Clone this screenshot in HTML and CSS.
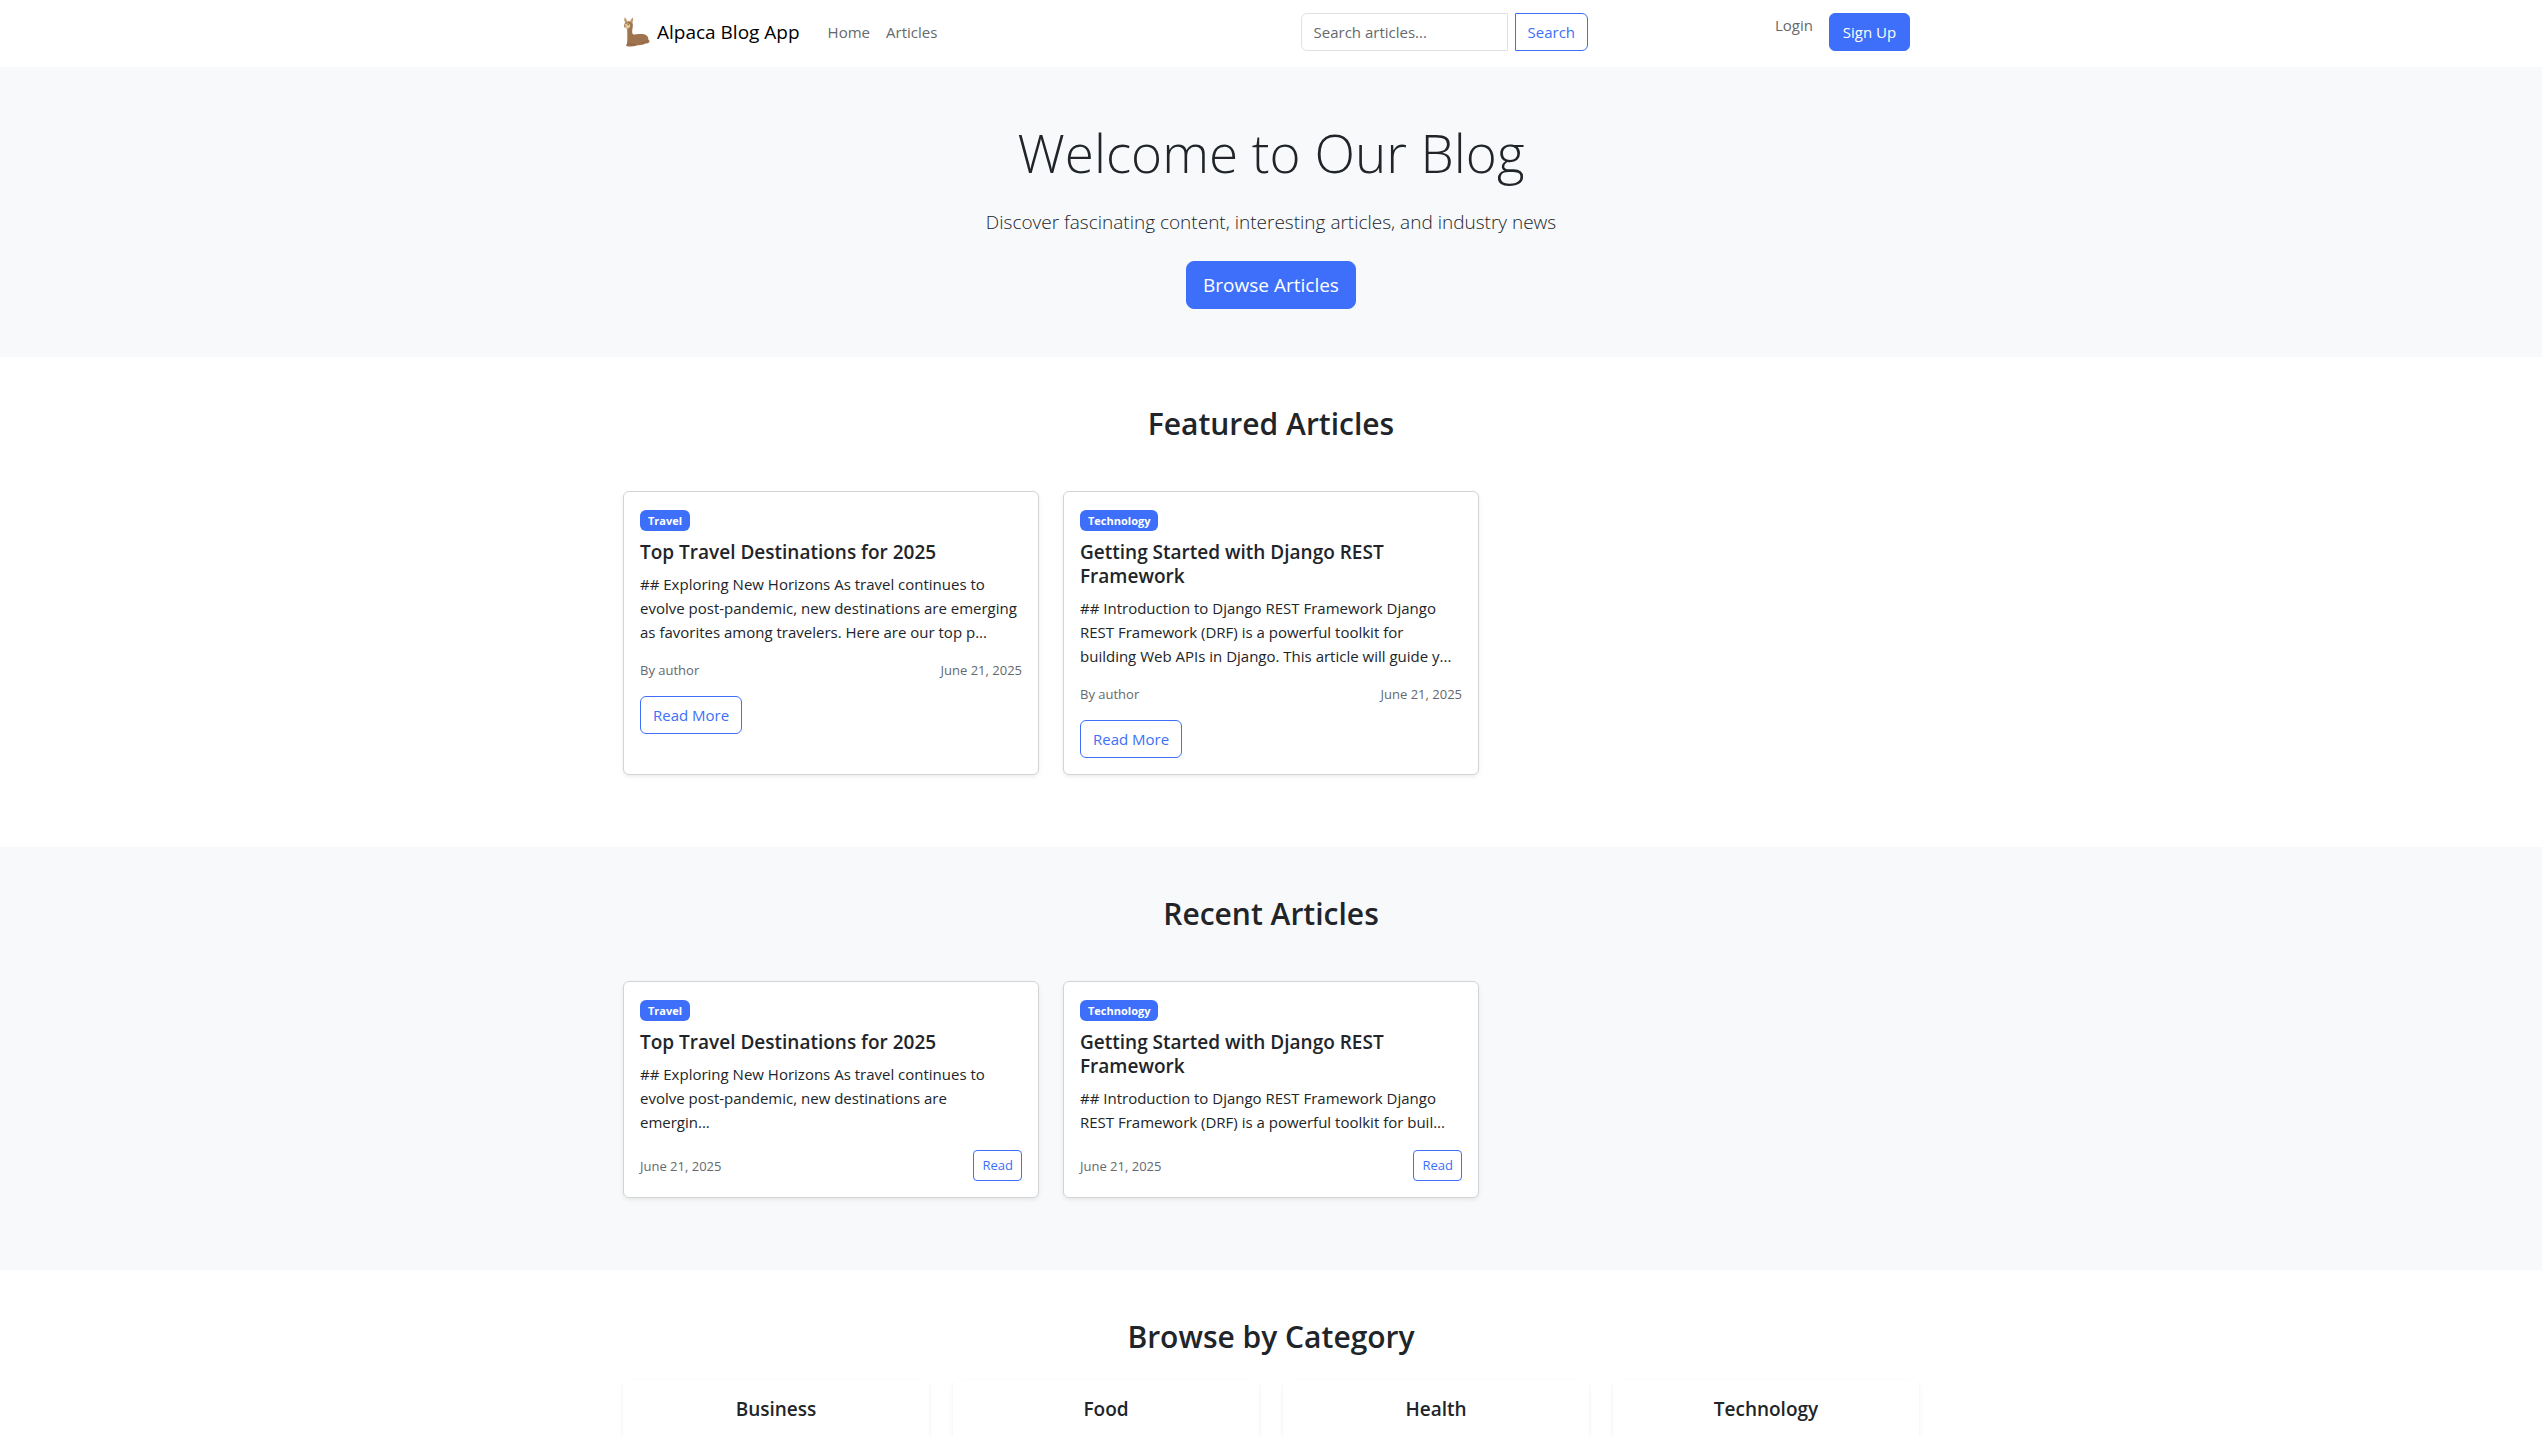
FILE: index.html
```html
<!DOCTYPE html>
<html lang="en">
<head>
<meta charset="utf-8">
<meta name="viewport" content="width=device-width, initial-scale=1">
<title>Alpaca Blog App</title>
<link rel="stylesheet" href="styles.css">
</head>
<body>
<header class="navbar">
  <div class="container navbar-inner">
    <a class="brand" href="#">
      <svg class="brand-logo" viewBox="0 0 28 30" aria-hidden="true">
        <path fill="#a0734f" d="M3 5 C4.500 3.800 8 3.800 9.300 5.600 C10.300 7.500 9.800 10.500 9.300 12.500 C9 15.500 9.200 17.300 10.500 17.600 C13.500 16.900 18 16.600 21 17.200 C24 17.800 25.600 20 25.300 22.600 C26.400 23.200 26.800 24.400 26.300 25.200 C25.600 26.200 24 26.200 22.500 26.600 C20 28.400 16 28.400 13.500 28.600 C10.500 29.700 6.500 29.700 4.200 29.300 C2.800 29 2.800 27.700 3.800 27.200 C4.500 24 4.300 20 4.300 17 C4.300 14.500 4.300 13 4 11.500 C2.200 11.200 .9 10.300 1.100 8.700 C1.300 7 1.800 5.900 3 5 Z"/>
        <path fill="#c49b70" d="M1.500 .6 C3 1 4.200 3 4.400 5.300 L2.400 6.200 C1.200 4.500 1 2.500 1.500 .6 Z M9.900 .6 C10.500 2.600 10.100 4.700 9 6.200 L7.200 4.800 C7.400 3 8.500 1.300 9.900 .6 Z"/>
        <path fill="#e3c79b" d="M3 6.800 C4.600 6 6.900 6.500 7.200 8.200 C7.400 10.200 5.800 11.900 3.900 11.600 C2.100 11.300 .9 10.400 1.100 8.900 C1.300 7.700 2 7.100 3 6.800 Z"/>
        <path fill="#5b3d27" d="M1.300 8.500 h1.200 v1 h-1.200 Z M4.700 7 h.9 v1 h-.9 Z"/>
        <path fill="none" stroke="#8a5e3c" stroke-width=".7" d="M4.800 27.600 C8 26.800 10.500 27.800 13 28 M18 25.800 C20.500 26.400 23 25.800 24.600 23"/>
      </svg>
      <span>Alpaca Blog App</span>
    </a>
    <nav class="nav-links">
      <a href="#">Home</a>
      <a href="#">Articles</a>
    </nav>
    <form class="search" role="search">
      <input class="search-input" type="search" placeholder="Search articles..." aria-label="Search articles">
      <button class="btn btn-outline search-button" type="submit">Search</button>
    </form>
    <div class="account">
      <a class="login" href="#">Login</a>
      <a class="btn btn-primary signup" href="#">Sign Up</a>
    </div>
  </div>
</header>
<main>
  <section class="hero">
    <h1>Welcome to Our Blog</h1>
    <p>Discover fascinating content, interesting articles, and industry news</p>
    <a class="btn btn-primary btn-large" href="#">Browse Articles</a>
  </section>

  <section class="section">
    <div class="container">
      <h2>Featured Articles</h2>
      <div class="articles">
        <article class="card">
          <div class="badge-row"><span class="badge">Travel</span></div>
          <h3>Top Travel Destinations for 2025</h3>
          <p>## Exploring New Horizons As travel continues to evolve post-pandemic, new destinations are emerging as favorites among travelers. Here are our top p...</p>
          <div class="meta"><span>By author</span><time datetime="2025-06-21">June 21, 2025</time></div>
          <a class="btn btn-outline" href="#">Read More</a>
        </article>
        <article class="card">
          <div class="badge-row"><span class="badge">Technology</span></div>
          <h3>Getting Started with Django REST Framework</h3>
          <p>## Introduction to Django REST Framework Django REST Framework (DRF) is a powerful toolkit for building Web APIs in Django. This article will guide y...</p>
          <div class="meta"><span>By author</span><time datetime="2025-06-21">June 21, 2025</time></div>
          <a class="btn btn-outline" href="#">Read More</a>
        </article>
      </div>
    </div>
  </section>

  <section class="section section-light">
    <div class="container">
      <h2>Recent Articles</h2>
      <div class="articles">
        <article class="card card-compact">
          <div class="badge-row"><span class="badge">Travel</span></div>
          <h3>Top Travel Destinations for 2025</h3>
          <p>## Exploring New Horizons As travel continues to evolve post-pandemic, new destinations are emergin...</p>
          <div class="card-footer"><time datetime="2025-06-21">June 21, 2025</time><a class="btn btn-outline btn-small" href="#">Read</a></div>
        </article>
        <article class="card card-compact">
          <div class="badge-row"><span class="badge">Technology</span></div>
          <h3>Getting Started with Django REST Framework</h3>
          <p>## Introduction to Django REST Framework Django REST Framework (DRF) is a powerful toolkit for buil...</p>
          <div class="card-footer"><time datetime="2025-06-21">June 21, 2025</time><a class="btn btn-outline btn-small" href="#">Read</a></div>
        </article>
      </div>
    </div>
  </section>

  <section class="section section-categories">
    <div class="container">
      <h2>Browse by Category</h2>
      <div class="categories">
        <div class="category"><h3>Business</h3></div>
        <div class="category"><h3>Food</h3></div>
        <div class="category"><h3>Health</h3></div>
        <div class="category"><h3>Technology</h3></div>
      </div>
    </div>
  </section>
</main>
</body>
</html>
```

FILE: styles.css
```css
:root {
  --primary: #3d6ffa;
  --text: #212529;
  --muted: #65696d;
  --light: #f8f9fb;
}

* {
  box-sizing: border-box;
}

body {
  margin: 0;
  background: #fff;
  color: var(--text);
  font-family: "Open Sans", "Noto Sans", sans-serif;
  font-size: 15px;
  line-height: 24px;
}

h1,
h2,
h3,
p {
  margin: 0;
}

a {
  color: inherit;
  text-decoration: none;
}

.container {
  max-width: 1320px;
  margin: 0 auto;
  padding: 0 12px;
}

.btn {
  display: inline-block;
  padding: 6px 12px;
  border: 1px solid var(--primary);
  border-radius: 6px;
  font: inherit;
  text-align: center;
  white-space: nowrap;
  cursor: pointer;
}

.btn-primary {
  background: var(--primary);
  color: #fff;
}

.btn-outline {
  background: transparent;
  color: var(--primary);
}

.btn-large {
  padding: 8px 16px;
  border-radius: 8px;
  font-size: 19px;
  line-height: 30px;
}

.btn-small {
  padding: 4px 8px;
  border-radius: 4px;
  font-size: 13px;
  line-height: 21px;
}

/* Navigation */
.navbar-inner {
  display: flex;
  align-items: center;
  padding-top: 13px;
  padding-bottom: 16px;
}

.brand {
  display: flex;
  align-items: center;
  gap: 6px;
  color: #000;
  font-size: 19px;
  white-space: nowrap;
}

.brand-logo {
  width: 28px;
  height: 30px;
}

.nav-links {
  display: flex;
  gap: 16px;
  margin-left: 28px;
  color: var(--muted);
}

.search {
  display: flex;
  gap: 7px;
  margin-left: auto;
}

.search-input {
  width: 207px;
  height: 38px;
  padding: 6px 12px;
  border: 1px solid #dee2e6;
  border-radius: 6px 0 0 6px;
  background: #fff;
  color: var(--text);
  font: inherit;
}

.search-input::placeholder {
  color: var(--muted);
  opacity: 1;
}

.search-button {
  border-radius: 0 6px 6px 0;
}

.account {
  display: flex;
  gap: 16px;
  margin-left: 187px;
  margin-right: 9px;
}

.login {
  color: var(--muted);
}

.signup {
  min-width: 81px;
}

/* Hero */
.hero {
  padding: 48px 12px;
  background: var(--light);
  text-align: center;
}

.hero h1 {
  margin-bottom: 16px;
  font-size: 53px;
  font-weight: 300;
  line-height: 76px;
}

.hero p {
  margin-bottom: 24px;
  font-size: 19px;
  font-weight: 300;
  line-height: 30px;
}

.hero .btn {
  vertical-align: top;
}

/* Sections */
.section {
  padding: 48px 0 72px;
}

.section-light {
  background: var(--light);
}

h2 {
  margin-bottom: 48px;
  font-size: 30px;
  font-weight: 600;
  line-height: 38px;
  text-align: center;
}

h3 {
  font-size: 19px;
  font-weight: 600;
  line-height: 24px;
}

.articles {
  display: grid;
  grid-template-columns: repeat(3, 1fr);
  gap: 24px;
}

.card {
  display: flex;
  flex-direction: column;
  align-items: flex-start;
  padding: 16px;
  border: 1px solid #d3d4d5;
  border-radius: 6px;
  background: #fff;
  box-shadow: 0 2px 4px rgba(0, 0, 0, 0.075);
}

.card h3,
.card .badge-row {
  margin-bottom: 8px;
}

.card p {
  margin-bottom: 16px;
}

.card-compact p {
  padding-right: 8px;
}

.badge-row {
  display: flex;
  align-items: center;
  height: 24px;
}

.badge {
  padding: 4px 8px;
  border-radius: 6px;
  background: var(--primary);
  color: #fff;
  font-size: 11px;
  font-weight: 700;
  line-height: 13px;
}

.meta,
.card-footer {
  display: flex;
  align-items: center;
  justify-content: space-between;
  width: 100%;
  color: var(--muted);
  font-size: 13px;
  line-height: 20px;
}

.meta {
  margin-bottom: 16px;
}

.card-footer {
  margin-top: auto;
}

/* Categories */
.section-categories h2 {
  margin-bottom: 24px;
}

.categories {
  display: grid;
  grid-template-columns: repeat(4, 1fr);
  gap: 24px;
}

.category {
  padding: 17px 16px 48px;
  border-radius: 6px;
  background: #fff;
  box-shadow: 0 2px 4px rgba(0, 0, 0, 0.075);
  text-align: center;
}
```
